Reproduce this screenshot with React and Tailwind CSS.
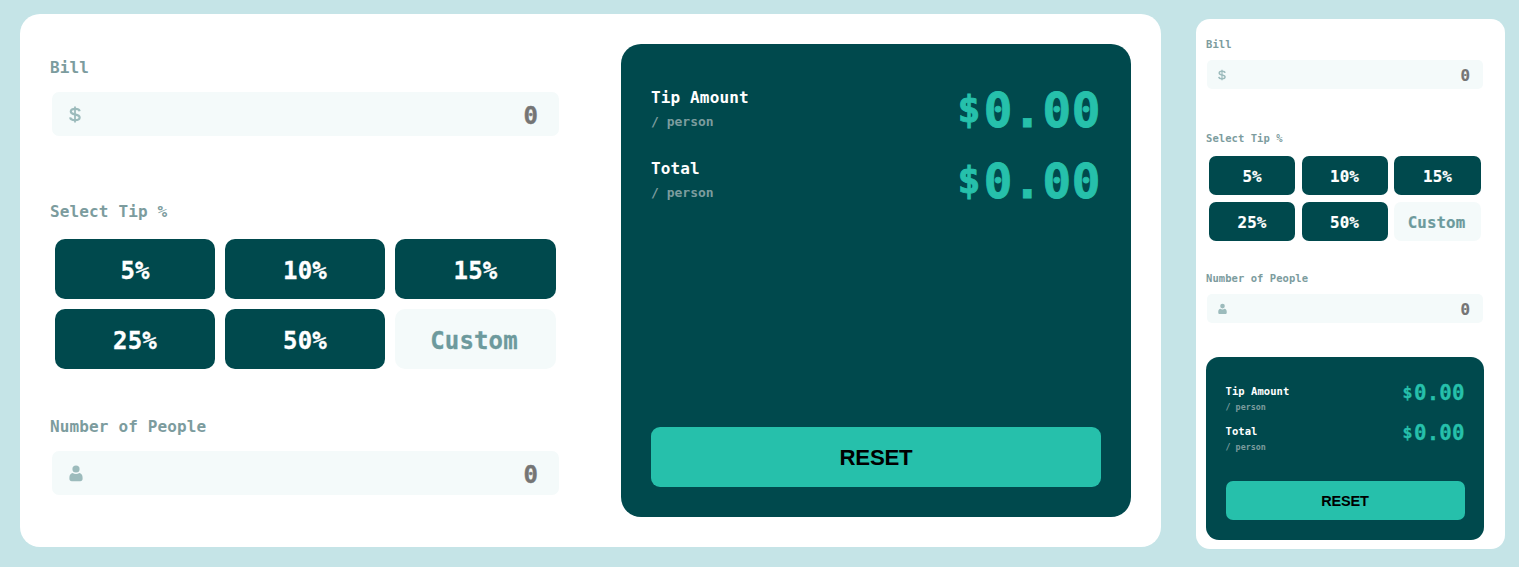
import React from 'react';

const mono = "font-['DejaVu_Sans_Mono','Liberation_Mono',monospace] font-bold";

const desktop = {
  card: 'w-[1141px] h-[533px] mt-[14px] ml-5 rounded-[20px] p-[30px] flex justify-between',
  form: 'w-[511px]',
  label: 'text-[16px] leading-6 tracking-[0.14px]',
  bill: 'pt-3',
  tip: 'mt-[64px]',
  people: 'mt-[46px]',
  input: 'mt-3 ml-[2px] w-[507px] h-11 rounded-[7px] pl-[17px] pr-[21px]',
  value: 'text-[24px] pt-[3px] leading-none [-webkit-text-stroke:0.4px]',
  dollar: 'w-[12px] h-[17px]',
  person: 'w-[14px] h-[17px]',
  grid: 'mt-[15px] ml-[5px] w-[501px] gap-[10px] grid-cols-[160px_160px_161px]',
  tipButton: 'h-[60px] rounded-[10px] text-[24px] tracking-[0.15px] pt-[3px] [-webkit-text-stroke:0.3px]',
  custom: 'pr-[3px]',
  panel: 'w-[510px] h-[473px] rounded-[20px] px-[30px] pt-[43px] pb-[30px]',
  row: 'h-[71px]',
  title: 'text-[16px] leading-[22px] tracking-[0.14px]',
  sub: 'text-[13px] leading-5 mt-[3px]',
  amount: 'text-[47.5px] leading-[48px] tracking-[0.7px] [-webkit-text-stroke:0.9px]',
  reset: 'h-[60px] rounded-[9px] text-[22.2px] tracking-[-0.2px] pt-[3px]',
};

const mobile = {
  card: 'w-[309px] h-[530px] mt-[19px] ml-[35px] rounded-[14px] pl-[10px] pt-[10px]',
  form: 'w-[278px]',
  label: 'text-[10.5px] leading-4 tracking-[0.06px]',
  bill: 'pt-[7px]',
  tip: 'mt-[41px]',
  people: 'mt-[29px]',
  input: 'mt-[8px] ml-[1px] w-[276px] h-[29px] rounded-[5px] pl-[11px] pr-[13px]',
  value: 'text-[15.8px] pt-[2px] leading-none [-webkit-text-stroke:0.2px]',
  dollar: 'w-[8px] h-[12px]',
  person: 'w-[9px] h-[12px]',
  grid: 'mt-[10px] ml-[3px] w-[272px] gap-x-[6.5px] gap-y-[7px] grid-cols-[86px_86px_87px]',
  tipButton: 'h-[39px] rounded-[7px] text-[15.8px] tracking-[0.1px] pt-[2px] [-webkit-text-stroke:0.2px]',
  custom: 'pr-[2px]',
  panel: 'w-[278px] h-[182.5px] mt-[34px] rounded-[13px] px-[19.5px] pt-[27px] pb-[19.5px]',
  row: 'h-[39.5px]',
  title: 'text-[10.5px] leading-[15px] tracking-[0.06px]',
  sub: 'text-[8.4px] leading-[14px] mt-px',
  amount: 'text-[20.8px] leading-[22px] tracking-[0.1px] -mt-[2px] [-webkit-text-stroke:0.3px]',
  reset: 'h-[39px] rounded-[7px] text-[14.5px] tracking-[-0.15px] pt-px',
};

function DollarIcon({ className }) {
  return (
    <svg viewBox="0 0 12 17" className={className} fill="none" stroke="#9cbbbc" strokeWidth="2.200">
      <path d="M10.6 5.2C10.3 3.4 8.5 2.8 6 2.8S1.8 3.6 1.8 5.4C1.8 7.4 3.5 7.9 6 8.4s4.6 1.100 4.600 3.100S8.700 14.200 6 14.200 1.400 13.300 1.200 11.400" />
      <path d="M6 0.500V16.500" strokeWidth="1.800" />
    </svg>
  );
}

function PersonIcon({ className }) {
  return (
    <svg viewBox="0 0 14 17" className={className} fill="#9cbbbc">
      <circle cx="7" cy="4" r="3.600" />
      <path d="M3.700 8.100C4.600 8.800 5.700 9.100 7 9.100s2.400-.3 3.300-1c2 .2 3.300 2 3.300 4.700v1c0 1.500-.8 2.500-2.300 2.500H2.700C1.200 16.300.4 15.300.4 13.800v-1c0-2.700 1.300-4.500 3.300-4.700Z" />
    </svg>
  );
}

function NumberField({ label, icon, theme, className }) {
  return (
    <div className={className}>
      <div className={`text-[#7c9c9e] whitespace-nowrap ${theme.label}`}>{label}</div>
      <div className={`bg-[#f4fafa] flex items-center justify-between ${theme.input}`}>
        {icon}
        <span className={`text-[#757575] ${theme.value}`}>0</span>
      </div>
    </div>
  );
}

function ResultRow({ title, theme }) {
  return (
    <div className={`flex justify-between items-start ${theme.row}`}>
      <div className="whitespace-nowrap">
        <div className={`text-white ${theme.title}`}>{title}</div>
        <div className={`text-[#7c9c9e] ${theme.sub}`}>/ person</div>
      </div>
      <div className={`text-[#26c0ab] ${theme.amount}`}>
        <span className="inline-block w-[0.77em] text-center text-[0.8em] leading-none align-[0.12em]">$</span>0.00
      </div>
    </div>
  );
}

function Calculator({ theme }) {
  return (
    <main className={`bg-white shrink-0 ${mono} ${theme.card}`}>
      <section className={theme.form}>
        <NumberField label="Bill" theme={theme} className={theme.bill} icon={<DollarIcon className={theme.dollar} />} />
        <div className={theme.tip}>
          <div className={`text-[#7c9c9e] ${theme.label}`}>Select Tip %</div>
          <div className={`grid ${theme.grid}`}>
            {['5%', '10%', '15%', '25%', '50%'].map((tip) => (
              <button key={tip} className={`bg-[#00494d] text-white leading-none ${theme.tipButton}`}>{tip}</button>
            ))}
            <button className={`bg-[#f4fafa] text-[#6d9a9d] leading-none ${theme.tipButton} ${theme.custom}`}>Custom</button>
          </div>
        </div>
        <NumberField label="Number of People" theme={theme} className={theme.people} icon={<PersonIcon className={theme.person} />} />
      </section>
      <section className={`bg-[#00494d] flex flex-col ${theme.panel}`}>
        <ResultRow title="Tip Amount" theme={theme} />
        <ResultRow title="Total" theme={theme} />
        <button className={`mt-auto w-full shrink-0 bg-[#26c0ab] text-black leading-none font-['Liberation_Sans',sans-serif] font-bold ${theme.reset}`}>
          RESET
        </button>
      </section>
    </main>
  );
}

export default function App() {
  return (
    <div className="w-full h-[567px] overflow-hidden bg-[#c5e4e7] flex items-start">
      <Calculator theme={desktop} />
      <Calculator theme={mobile} />
    </div>
  );
}
